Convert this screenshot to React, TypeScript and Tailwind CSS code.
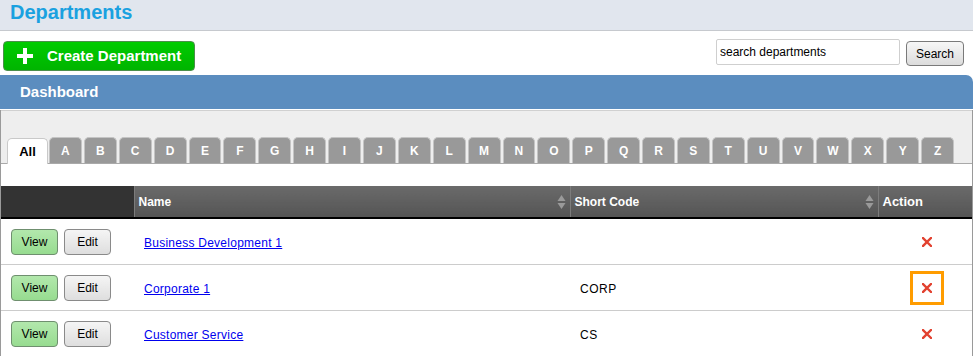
import React from "react"

const LETTERS = "ABCDEFGHIJKLMNOPQRSTUVWXYZ".split("")

const ROWS = [
  { name: "Business Development 1", code: "" },
  { name: "Corporate 1", code: "CORP", focused: true },
  { name: "Customer Service", code: "CS" },
]

function SortIcon() {
  return (
    <svg width="9" height="16" viewBox="0 0 9 16" className="shrink-0">
      <path d="M4.5 1 L8.5 7 L0.5 7 Z" fill="#9a9a9a" />
      <path d="M4.5 15 L8.5 9 L0.5 9 Z" fill="#9a9a9a" />
    </svg>
  )
}

function DeleteIcon() {
  return (
    <svg width="10" height="10" viewBox="0 0 10 10">
      <path d="M1 1 L9 9 M9 1 L1 9" stroke="#e2412f" strokeWidth="2.4" strokeLinecap="square" />
    </svg>
  )
}

export default function App() {
  return (
    <div className="w-[973px] h-[356px] overflow-hidden bg-white font-['Liberation_Sans',Arial,sans-serif] text-black">
      {/* Page title */}
      <div className="h-[31px] bg-[#e1e6ee] border-b border-[#c6c9ce] pl-[10px] flex items-center">
        <h1 className="text-[20px] font-bold text-[#1aa1e0] leading-none -mt-[6px]">Departments</h1>
      </div>

      {/* Toolbar */}
      <div className="h-[44px] flex items-start justify-between pl-[3px] pr-[9px]">
        <button className="mt-[10px] w-[192px] h-[30px] rounded-[4px] border border-[#4b8f4b] bg-gradient-to-b from-[#00cc00] to-[#00b400] flex items-center pl-[13px] text-white">
          <svg width="16" height="16" viewBox="0 0 16 16" className="shrink-0">
            <path d="M6 0 H10 V6 H16 V10 H10 V16 H6 V10 H0 V6 H6 Z" fill="#fff" />
          </svg>
          <span className="ml-[14px] text-[15px] font-bold">Create Department</span>
        </button>
        <div className="flex items-start gap-[6px] mt-[8px]">
          <input
            readOnly
            value="search departments"
            className="w-[184px] h-[26px] border border-[#cfcfcf] rounded-[2px] px-[3px] text-[12px] text-black outline-none"
          />
          <button className="mt-[2px] w-[58px] h-[25px] rounded-[4px] border border-[#7a7a7a] bg-gradient-to-b from-[#f7f7f7] to-[#dcdcdc] text-[12px]">
            Search
          </button>
        </div>
      </div>

      {/* Dashboard bar */}
      <div className="h-[35px] bg-[#5b8dbf] rounded-tr-[7px] pl-[20px] flex items-center border-b border-white">
        <span className="text-white text-[15px] font-bold">Dashboard</span>
      </div>

      {/* Content box */}
      <div className="border-l border-r border-[#9a9a9a]">
        {/* Tabs */}
        <div className="h-[54px] bg-[#eeeeee] border-t border-[#d0d0d0] flex items-end pl-[6px] border-b border-b-[#a9a9a9]">
          <div className="w-[41px] h-[26px] -mb-px bg-white border border-b-0 border-[#c9c9c9] rounded-t-[5px] flex items-center justify-center text-[13px] font-bold">
            All
          </div>
          <div className="ml-[1px] w-[905px] grid grid-cols-[repeat(26,minmax(0,1fr))] gap-[2px]">
            {LETTERS.map((l) => (
              <div
                key={l}
                className="h-[26px] bg-[#999999] border border-b-0 border-[#c4c4c4] rounded-t-[5px] flex items-center justify-center text-[12px] font-bold text-white"
              >
                {l}
              </div>
            ))}
          </div>
        </div>

        <div className="h-[22px]" />

        {/* Table */}
        <table className="w-full border-collapse text-[12px]">
          <thead>
            <tr className="h-[32px] text-white font-bold text-left border-b-2 border-black">
              <th className="w-[133px] bg-[#333333]" />
              <th className="w-[436px] bg-gradient-to-b from-[#6a6a6a] to-[#555555] border-l border-[#7c7c7c] pl-[4px]">
                <div className="flex items-center justify-between pr-[4px]">
                  <span>Name</span>
                  <SortIcon />
                </div>
              </th>
              <th className="w-[308px] bg-gradient-to-b from-[#6a6a6a] to-[#555555] border-l border-[#7c7c7c] pl-[4px]">
                <div className="flex items-center justify-between pr-[4px]">
                  <span>Short Code</span>
                  <SortIcon />
                </div>
              </th>
              <th className="bg-gradient-to-b from-[#6a6a6a] to-[#555555] border-l border-[#7c7c7c] pl-[4px] text-[13px]">
                Action
              </th>
            </tr>
          </thead>
          <tbody>
            {ROWS.map((r) => (
              <tr key={r.name} className="h-[46px] border-b border-[#cccccc]">
                <td className="pl-[10px] pt-[2px]">
                  <div className="flex gap-[6px]">
                    <button className="w-[47px] h-[26px] rounded-[4px] border border-[#6f8f6f] bg-gradient-to-b from-[#b2e8ac] to-[#97dc90] text-[12px]">
                      View
                    </button>
                    <button className="w-[47px] h-[26px] rounded-[4px] border border-[#8a8a8a] bg-gradient-to-b from-[#f5f5f5] to-[#dedede] text-[12px]">
                      Edit
                    </button>
                  </div>
                </td>
                <td className="pl-[10px] pt-[3px]">
                  <a href="#" className="text-[#0000ee] underline tracking-[0.25px]">{r.name}</a>
                </td>
                <td className="pl-[10px] pt-[3px] tracking-[0.5px]">{r.code}</td>
                <td className="pt-[2px]">
                  <div className="flex justify-center pl-[3px]">
                    <div
                      className={
                        r.focused
                          ? "w-[34px] h-[34px] border-[3px] border-[#ff9c00] flex items-center justify-center"
                          : "w-[34px] h-[34px] flex items-center justify-center"
                      }
                    >
                      <DeleteIcon />
                    </div>
                  </div>
                </td>
              </tr>
            ))}
          </tbody>
        </table>
      </div>
    </div>
  )
}
